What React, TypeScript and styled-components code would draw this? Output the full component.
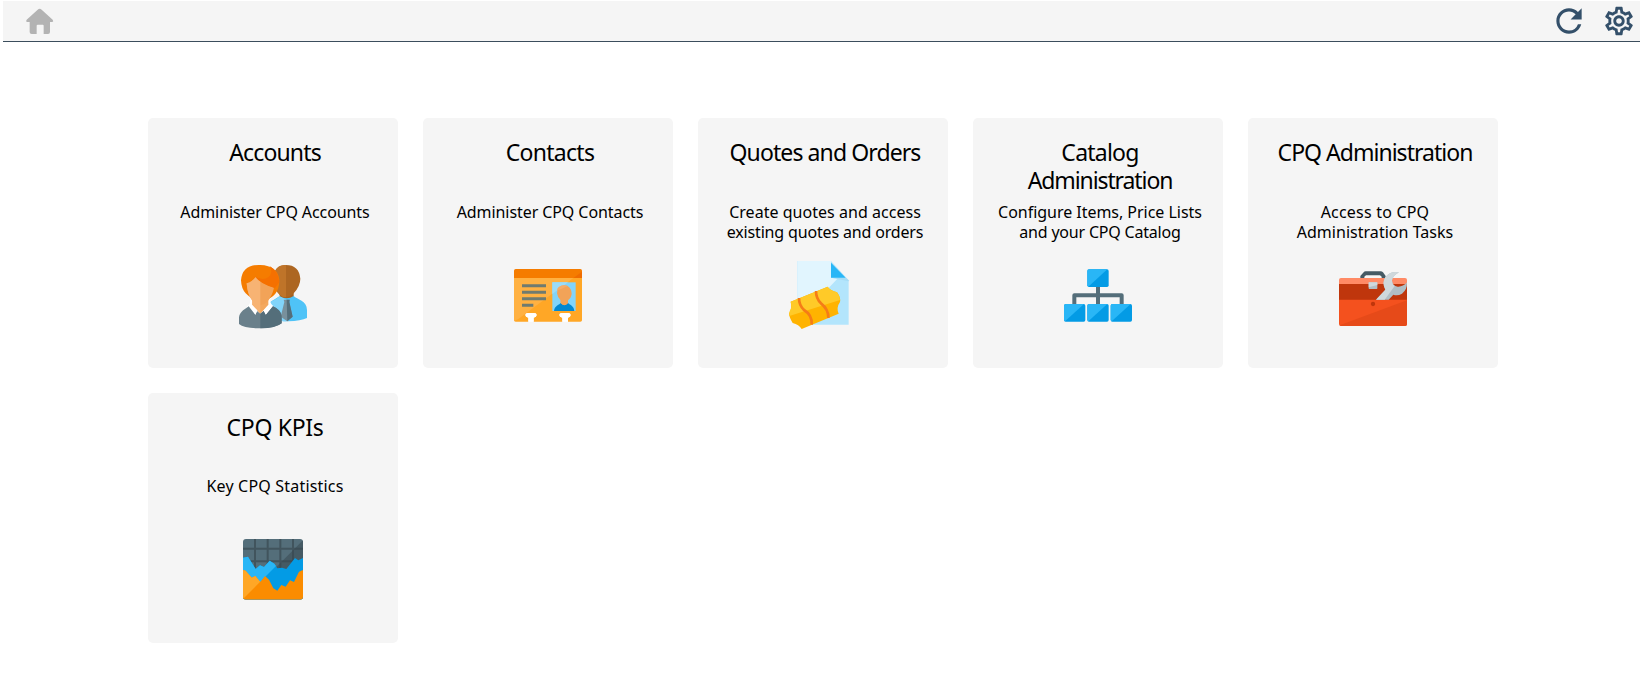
import React from 'react';
import styled, { createGlobalStyle } from 'styled-components';
import { MdOutlineSettings, MdRefresh } from 'react-icons/md';

const GlobalStyle = createGlobalStyle`
  body {
    margin: 0;
    background: #fff;
    color: #000;
    font-family: Tahoma, 'Noto Sans', sans-serif;
  }
`;

const Page = styled.div`
  box-sizing: border-box;
  min-height: 677px;
  padding: 1px 0 0 3px;
  overflow: hidden;
`;

const Toolbar = styled.header`
  box-sizing: border-box;
  height: 41px;
  display: flex;
  align-items: center;
  justify-content: space-between;
  padding: 0 4px 0 22px;
  background: #f5f5f5;
  border-bottom: 1px solid #3b4d5c;
`;

const ToolGroup = styled.div`
  display: flex;
  align-items: center;
  gap: 14px;
`;

const ToolButton = styled.button<{ $tone: string }>`
  display: flex;
  padding: 0;
  border: 0;
  background: none;
  color: ${(p) => p.$tone};

  svg {
    display: block;
  }
`;

const Tiles = styled.main`
  display: grid;
  grid-template-columns: repeat(5, 250px);
  grid-auto-rows: 250px;
  gap: 25px;
  padding: 76px 0 0 145px;
`;

const Tile = styled.a`
  display: flex;
  flex-direction: column;
  align-items: center;
  border-radius: 5px;
  background: #f5f5f5;
  overflow: hidden;
`;

const TileTitle = styled.h2<{ $height: number }>`
  margin: 0;
  padding: 20px 0 0 4px;
  height: ${(p) => p.$height}px;
  font-size: 23px;
  font-weight: 400;
  line-height: 28px;
  text-align: center;
`;

const TileText = styled.p`
  flex: 1;
  margin: 0;
  padding-left: 4px;
  font-size: 16px;
  line-height: 20px;
  text-align: center;
`;

const Line = styled.span<{ $track: number }>`
  display: block;
  white-space: nowrap;
  letter-spacing: ${(p) => p.$track}px;
`;

const TileIcon = styled.svg`
  display: block;
  width: 100px;
  height: 90px;
  margin: 0 0 28px 4px;
`;

const HomeIcon = () => (
  <svg width="30" height="28" viewBox="1 -3 90 84" fill="#b3b3b3">
    <path d="M45 2 Q48 2 51 5 L84 35 Q88 40 83 42 H76 V72 Q76 78 70 78 H57 V53 Q57 50 54 50 H39 Q36 50 36 53 V78 H21 Q15 78 15 72 V42 H7 Q2 40 6 35 L39 5 Q42 2 45 2Z" />
  </svg>
);

const AccountsIcon = () => (
  <>
    <path d="M130 165 C138 150 158 144 164 138 H206 C216 148 246 152 246 180 V204 Q228 213 190 214 Q160 214 140 200Z" fill="#4fc3f7" />
    <path d="M128 160 Q155 148 164 138 L185 150 V214 Q160 214 140 200Z" fill="#81d4fa" />
    <path d="M164 122 H206 V138 Q185 152 164 138Z" fill="#a5611f" />
    <path d="M183 45 Q148 45 144 85 Q146 118 164 134 Q183 152 206 130 Q226 108 226 86 Q222 45 183 45Z" fill="#ad6621" />
    <path d="M183 45 Q148 45 144 85 Q146 118 164 134 Q172 142 183 142Z" fill="#bf7429" />
    <path d="M176 149 H194 L193 156 L203 200 L187 214 L167 200 L178 156Z" fill="#78909c" />
    <path d="M185 149 H194 L193 156 L203 200 L187 214Z" fill="#546e7a" />
    <path d="M76 143 Q78 162 66 169 L106 222 L146 169 Q133 161 136 142Z" fill="#fff" />
    <path d="M106 45 Q52 43 48 91 Q49 116 62 130 Q86 154 106 148 Q133 153 151 131 Q163 116 163 89 Q158 47 106 45Z" fill="#f57c00" />
    <path d="M82 146 H130 V164 L106 191 L82 164Z" fill="#f4a85e" />
    <path d="M65 100 Q82 96 92 81 Q110 101 147 113 Q142 137 126 157 Q106 174 86 157 Q66 133 65 100Z" fill="#f2a358" />
    <path d="M65 100 Q82 96 92 81 L106 94 V191 L82 164 V153 Q67 133 65 100Z" fill="#f7b373" />
    <path d="M89 79 Q108 104 150 114 L163 97 Q160 64 134 48 Q146 68 130 82 Q113 94 89 79Z" fill="#f57000" />
    <path d="M42 222 V202 C45 182 62 178 71 169 L91 194 L96 183 L106 191 L116 183 L123 194 L144 169 C157 176 170 184 170 202 V220 Q152 235 106 235 Q58 235 42 222Z" fill="#6a808b" />
    <path d="M106 191 L116 183 L123 194 L144 169 C157 176 170 184 170 202 V220 Q152 235 106 235Z" fill="#546e7a" />
    <path d="M76 163 L91 194 L97 181Z M137 163 L122 194 L116 181Z" fill="#fff" />
  </>
);

const ContactsIcon = () => (
  <>
    <path d="M42 84 H246 V211 Q246 215 241 215 H204 V203 Q212 200 212 195 Q212 189 204 189 H186 Q178 189 178 195 Q178 201 187 203 V215 H101 V203 Q110 200 110 195 Q110 189 102 189 H84 Q76 189 76 195 Q76 201 85 203 V215 H47 Q42 215 42 211Z" fill="#ffa726" />
    <path d="M42 84 H220 L55 207 L42 213Z" fill="#ffb142" />
    <path d="M42 84 V62 Q42 57 47 57 H241 Q246 57 246 62 V84Z" fill="#f57c00" />
    <path d="M220 84 L246 65 V84Z" fill="#ef6c00" />
    <path d="M85 203 Q76 201 76 195 Q76 189 84 189 H102 Q110 189 110 195 Q110 201 101 203 V215 H85Z M187 203 Q178 201 178 195 Q178 189 186 189 H204 Q212 189 212 195 Q212 201 204 203 V215 H187Z" fill="#fff" />
    <path d="M66 107 H138 M66 127 H138 M66 146 H138 M66 166 H100" stroke="#6f7b70" strokeWidth="9" fill="none" />
    <rect x="157" y="97" width="70" height="86" fill="#81d4fa" />
    <path d="M157 97 H204 L157 132Z" fill="#9bdcf9" />
    <path d="M162 183 C164 166 179 164 182 159 H204 C208 164 221 166 223 183Z" fill="#0288d1" />
    <path d="M182 158 Q193 173 204 158 V145 H182Z" fill="#f2a358" />
    <path d="M193 106 Q172 107 171 130 Q173 144 182 151 V160 Q193 170 204 160 V151 Q215 143 215 130 Q213 107 193 106Z" fill="#f2a358" />
    <path d="M193 106 Q172 107 171 122 L203 108 Q199 106 193 106Z" fill="#f5ac68" />
  </>
);

const QuotesIcon = () => (
  <>
    <path d="M67 33 H168 L221 91 V224 H67Z" fill="#b3e5fc" />
    <path d="M67 33 H168 V83 L190 83 L67 214Z" fill="#e1f5fe" />
    <path d="M168 83 H213 L221 91 V94Z" fill="#a5dcf6" />
    <path d="M168 38 L212 83 H168Z" fill="#29b6f6" />
    <path d="M47 155 L158 110 Q165 121 186 127 Q198 143 195 156 Q183 173 191 191 L80 237 Q72 224 53 219 Q43 202 42 191 Q52 175 47 155Z" fill="#ffb300" />
    <path d="M47 155 L158 110 Q165 121 186 127 Q195 138 195 150 L43 198 Q41 190 44 184 Q52 172 47 155Z" fill="#ffca28" />
    <path d="M72 144 Q72 166 87 180 Q112 195 110 224 M123 123 Q123 146 138 160 Q161 178 160 204" stroke="#f57c17" strokeWidth="8" fill="none" />
  </>
);

const BoxShape = ({ x, y }: { x: number; y: number }) => (
  <g>
    <rect x={x} y={y} width="64" height="53" rx="5" fill="#039be5" />
    <path d={`M${x} ${y + 48} V${y + 5} Q${x} ${y} ${x + 5} ${y} H${x + 60} L${x + 3} ${y + 52}Z`} fill="#29b6f6" />
  </g>
);

const CatalogIcon = () => (
  <>
    <path d="M73 164 V136 H215 V164 M144 108 V164" stroke="#546e7a" strokeWidth="12" strokeLinejoin="round" fill="none" />
    <BoxShape x={112} y={58} />
    <BoxShape x={42} y={162} />
    <BoxShape x={112} y={162} />
    <BoxShape x={182} y={162} />
  </>
);

const AdministrationIcon = () => (
  <>
    <path d="M106 84 V78 L116 67 Q118 64 122 64 H167 Q171 64 174 67 L182 78 V84 H170 V80 L165 76 H123 L118 80 V84Z" fill="#455a64" />
    <path d="M42 102 V90 Q42 84 48 84 H240 Q246 84 246 90 V102Z" fill="#ff8a65" />
    <rect x="42" y="102" width="204" height="48" fill="#bf360c" />
    <path d="M42 149 H246 V222 Q246 228 240 228 H48 Q42 228 42 222Z" fill="#f4511e" />
    <path d="M246 151 V222 Q246 228 240 228 H48 L44 226Z" fill="#e64a19" />
    <circle cx="144" cy="162" r="6.5" fill="#bf360c" />
    <rect x="131" y="97" width="26" height="20" rx="2" fill="#b0bec5" />
    <path d="M131 97 H157 V105 L131 112Z" fill="#cfd8dc" />
    <path d="M153 149 L181 119 Q170 99 181 82 Q196 62 222 67 Q204 76 201 91 Q202 108 218 110 Q234 111 246 97 Q247 119 231 131 Q217 139 205 134 L191 149Z" fill="#b0bec5" />
    <path d="M153 149 L181 119 Q170 99 181 82 Q196 62 222 67 Q204 76 201 91 Q201 103 209 108 L179 149Z" fill="#cfd8dc" />
  </>
);

const KpiIcon = () => (
  <>
    <defs>
      <clipPath id="kpi-frame">
        <rect x="54" y="42" width="180" height="182" rx="9" />
      </clipPath>
    </defs>
    <g clipPath="url(#kpi-frame)">
      <rect x="54" y="42" width="180" height="182" fill="#546e7a" />
      <path d="M234 46 L140 140 H234Z" fill="#455a64" />
      <path d="M54 71 H234 M54 109 H234 M90 42 V140 M128 42 V140 M166 42 V140 M204 42 V140" stroke="#37474f" strokeOpacity="0.65" strokeWidth="6" fill="none" />
      <path d="M54 98 L69 95 L92 132 L105 121 L117 126 L134 107 L148 116 L157 130 L171 128 L184 132 L210 99 L220 106 L234 99 V224 H54Z" fill="#039be5" />
      <path d="M54 98 L69 95 L92 132 L105 121 L117 126 L134 107 L148 116 L153 123 L54 222Z" fill="#29b6f6" />
      <path d="M54 135 L62 137 L80 158 L91 153 L106 171 L120 153 L132 164 L145 190 L157 197 L169 180 L182 185 L195 166 L207 171 L222 140 L234 135 V224 H54Z" fill="#fb8c00" />
      <path d="M54 135 L62 137 L80 158 L91 153 L106 171 L113 163 L54 222Z" fill="#ffa726" />
    </g>
  </>
);

type TextLine = [text: string, track: number];

interface TileData {
  title: TextLine[];
  titleHeight?: number;
  text: TextLine[];
  icon: React.ReactNode;
}

const tiles: TileData[] = [
  {
    title: [['Accounts', -0.85]],
    text: [['Administer CPQ Accounts', -0.09]],
    icon: <AccountsIcon />,
  },
  {
    title: [['Contacts', -0.72]],
    text: [['Administer CPQ Contacts', -0.08]],
    icon: <ContactsIcon />,
  },
  {
    title: [['Quotes and Orders', -0.9]],
    text: [['Create quotes and access', 0.03], ['existing quotes and orders', -0.16]],
    icon: <QuotesIcon />,
  },
  {
    title: [['Catalog', -0.77], ['Administration', -1.1]],
    text: [['Configure Items, Price Lists', -0.03], ['and your CPQ Catalog', -0.2]],
    icon: <CatalogIcon />,
  },
  {
    title: [['CPQ Administration', -0.98]],
    text: [['Access to CPQ', 0.2], ['Administration Tasks', 0.03]],
    icon: <AdministrationIcon />,
  },
  {
    title: [['CPQ KPIs', -0.31]],
    titleHeight: 63,
    text: [['Key CPQ Statistics', 0.19]],
    icon: <KpiIcon />,
  },
];

const renderLines = (lines: TextLine[]) =>
  lines.map(([text, track]) => (
    <Line key={text} $track={track}>
      {text}
    </Line>
  ));

export default function App() {
  return (
    <Page>
      <GlobalStyle />
      <Toolbar>
        <ToolButton $tone="#b3b3b3" aria-label="Home">
          <HomeIcon />
        </ToolButton>
        <ToolGroup>
          <ToolButton $tone="#34506a" aria-label="Refresh">
            <MdRefresh size={38} />
          </ToolButton>
          <ToolButton $tone="#34506a" aria-label="Settings">
            <MdOutlineSettings size={34} />
          </ToolButton>
        </ToolGroup>
      </Toolbar>
      <Tiles>
        {tiles.map((tile) => (
          <Tile key={tile.title[0][0]}>
            <TileTitle $height={tile.titleHeight ?? 64}>{renderLines(tile.title)}</TileTitle>
            <TileText>{renderLines(tile.text)}</TileText>
            <TileIcon viewBox="0 0 300 270">{tile.icon}</TileIcon>
          </Tile>
        ))}
      </Tiles>
    </Page>
  );
}
